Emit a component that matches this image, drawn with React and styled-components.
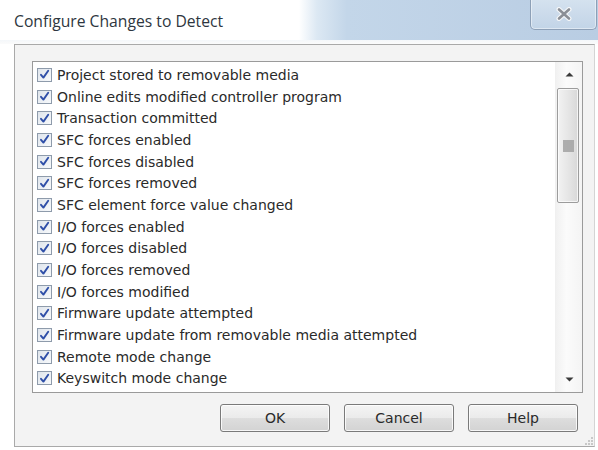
import React from "react";
import styled, { createGlobalStyle } from "styled-components";

const GlobalStyle = createGlobalStyle`
  html, body { margin: 0; padding: 0; background: #ffffff; }
  * { box-sizing: border-box; }
`;

const items = [
  "Project stored to removable media",
  "Online edits modified controller program",
  "Transaction committed",
  "SFC forces enabled",
  "SFC forces disabled",
  "SFC forces removed",
  "SFC element force value changed",
  "I/O forces enabled",
  "I/O forces disabled",
  "I/O forces removed",
  "I/O forces modified",
  "Firmware update attempted",
  "Firmware update from removable media attempted",
  "Remote mode change",
  "Keyswitch mode change",
];

const Window = styled.div`
  width: 598px;
  height: 450px;
  display: flex;
  flex-direction: column;
  background: #ffffff;
  overflow: hidden;
  font-family: "Open Sans", "Noto Sans", sans-serif;
`;

const TitleBar = styled.div`
  height: 44px;
  flex: none;
  display: flex;
  justify-content: space-between;
  align-items: flex-start;
  padding-left: 14px;
  background:
    linear-gradient(to bottom, transparent 0, transparent 40px, #f4f7fa 40px, #fbfbfb 44px),
    linear-gradient(to right, #ffffff 0%, #ffffff 50%, #dce8f3 53%, #c3d6e9 58%, #b9cde3 100%);
`;

const Title = styled.div`
  margin-top: 10px;
  font-size: 15.7px;
  color: #2e3640;
`;

const CloseButton = styled.div`
  width: 67px;
  height: 31px;
  margin-top: -1px;
  margin-right: 1px;
  border: 1px solid #8da0b7;
  border-top: none;
  border-radius: 0 0 5px 5px;
  background: linear-gradient(to bottom, #d5e2ef, #c2d4e7);
  box-shadow: inset 0 0 0 1px rgba(255, 255, 255, 0.45);
  display: flex;
  align-items: center;
  justify-content: center;
`;

const Frame = styled.div`
  flex: none;
  height: 403px;
  margin-left: 14px;
  margin-right: 3px;
  border: 1px solid #a9a9a9;
  border-right-color: #d4d4d4;
  background: #f3f3f3;
  padding: 16px 0 0 17px;
  display: flex;
  flex-direction: column;
  position: relative;
`;

const ListBox = styled.div`
  width: 551px;
  height: 332px;
  border: 1px solid #9a9a9a;
  background: #ffffff;
  display: flex;
  overflow: hidden;
`;

const Rows = styled.div`
  flex: 1;
  padding-top: 2px;
  padding-left: 4px;
  overflow: hidden;
`;

const Row = styled.div`
  height: 21.7px;
  display: flex;
  align-items: center;
  gap: 5px;
  font-family: "DejaVu Sans", Verdana, sans-serif;
  font-size: 14px;
  color: #2a2a2a;
  white-space: nowrap;
`;

const Box = styled.span`
  width: 15px;
  height: 14px;
  flex: none;
  border: 1px solid #8e9bab;
  background: linear-gradient(135deg, #dfe5ec, #f7f9fb);
  display: flex;
  align-items: center;
  justify-content: center;
`;

const ScrollBar = styled.div`
  width: 27px;
  flex: none;
  display: flex;
  flex-direction: column;
  align-items: center;
  background: linear-gradient(to right, #f1f1f1, #fbfbfb 40%, #f4f4f4);
  border-left: 1px solid #f0f0f0;
`;

const Arrow = styled.div`
  height: 25px;
  width: 100%;
  flex: none;
  display: flex;
  align-items: center;
  justify-content: center;
`;

const Track = styled.div`
  flex: 1;
  width: 100%;
  display: flex;
  flex-direction: column;
  align-items: center;
`;

const Thumb = styled.div`
  width: 22px;
  height: 115px;
  margin-top: 1px;
  margin-right: 2px;
  border: 1px solid #9c9c9c;
  border-radius: 2px;
  background: linear-gradient(to right, #f2f2f2, #e6e6e6 50%, #d8d8d8);
  box-shadow: inset 0 0 0 1px rgba(255, 255, 255, 0.7);
  display: flex;
  align-items: center;
  justify-content: center;
`;

const Grip = styled.div`
  width: 11px;
  height: 12px;
  background: #9d9d9d;
  opacity: 0.8;
`;

const ButtonRow = styled.div`
  display: flex;
  gap: 14px;
  padding-left: 188px;
  margin-top: 11px;
`;

const Button = styled.div`
  width: 110px;
  height: 28px;
  border: 1px solid #7a7a7a;
  border-radius: 3px;
  background: linear-gradient(to bottom, #f4f4f4 0%, #ebebeb 48%, #dddddd 52%, #d3d3d3 100%);
  box-shadow: inset 0 0 0 1px rgba(255, 255, 255, 0.8);
  display: flex;
  align-items: center;
  justify-content: center;
  font-family: "DejaVu Sans", Verdana, sans-serif;
  font-size: 14px;
  color: #2a2a2a;
`;

const SizeGrip = styled.div`
  position: absolute;
  right: 1px;
  bottom: 1px;
  display: grid;
  grid-template-columns: repeat(3, 2px);
  gap: 1px;
`;

const Dot = styled.span`
  width: 2px;
  height: 2px;
  background: ${(p) => (p.$on ? "#c8c8c8" : "transparent")};
`;

const Check = () => (
  <svg width="11" height="11" viewBox="0 0 11 11">
    <path d="M2 5.8 L4.4 8.6 L9.2 1.8" fill="none" stroke="#2f4fa8" strokeWidth="1.9" strokeLinecap="round" strokeLinejoin="round" />
  </svg>
);

const CloseGlyph = () => (
  <svg width="18" height="14" viewBox="0 0 18 14">
    <path d="M4 2.5 L14 11.5 M14 2.5 L4 11.5" stroke="#f4f6f8" strokeWidth="5" strokeLinecap="round" />
    <path d="M4 2.5 L14 11.5 M14 2.5 L4 11.5" stroke="#8b8f96" strokeWidth="2.6" strokeLinecap="round" />
  </svg>
);

const Tri = ({ up }) => (
  <svg width="9" height="5" viewBox="0 0 9 5">
    <path d={up ? "M0.5 4.5 L4.5 0.5 L8.5 4.5 Z" : "M0.5 0.5 L4.5 4.5 L8.5 0.5 Z"} fill="#3a3a3a" />
  </svg>
);

const grip = [0, 0, 1, 0, 1, 1, 1, 1, 1];

export default function App() {
  return (
    <>
      <GlobalStyle />
      <Window>
        <TitleBar>
          <Title>Configure Changes to Detect</Title>
          <CloseButton>
            <CloseGlyph />
          </CloseButton>
        </TitleBar>
        <Frame>
          <ListBox>
            <Rows>
              {items.map((t) => (
                <Row key={t}>
                  <Box>
                    <Check />
                  </Box>
                  {t}
                </Row>
              ))}
            </Rows>
            <ScrollBar>
              <Arrow>
                <Tri up />
              </Arrow>
              <Track>
                <Thumb>
                  <Grip />
                </Thumb>
              </Track>
              <Arrow>
                <Tri />
              </Arrow>
            </ScrollBar>
          </ListBox>
          <ButtonRow>
            <Button>OK</Button>
            <Button>Cancel</Button>
            <Button>Help</Button>
          </ButtonRow>
          <SizeGrip>
            {grip.map((v, i) => (
              <Dot key={i} $on={v} />
            ))}
          </SizeGrip>
        </Frame>
      </Window>
    </>
  );
}
